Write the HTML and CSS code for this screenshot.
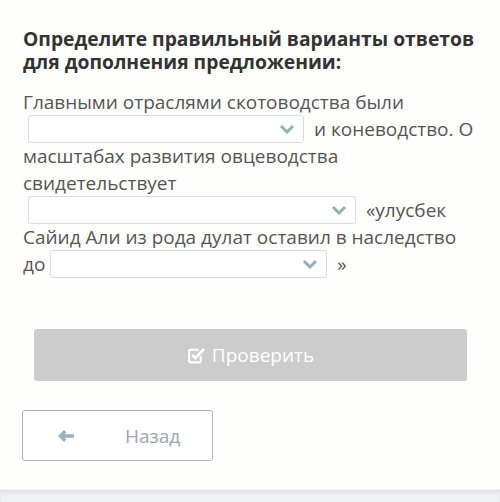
FILE: index.html
```html
<!DOCTYPE html>
<html>
<head>
<meta charset="utf-8">
<link rel="stylesheet" href="styles.css">
</head>
<body>
<div class="page">
  <div class="content">
    <h1 class="title">Определите правильный варианты ответов для дополнения предложении:</h1>
    <div class="text">Главными отраслями скотоводства были<span class="sel sel1"><svg class="chev" viewBox="0 0 16 10" width="16" height="10"><path d="M2 2 L8 8 L14 2" fill="none" stroke="#8fb3b6" stroke-width="3"/></svg></span> и коневодство. О масштабах развития овцеводства свидетельствует<span class="sel sel2"><svg class="chev" viewBox="0 0 16 10" width="16" height="10"><path d="M2 2 L8 8 L14 2" fill="none" stroke="#8fb3b6" stroke-width="3"/></svg></span> «улусбек Сайид Али из рода дулат оставил в наследство до<span class="sel sel3"><svg class="chev" viewBox="0 0 16 10" width="16" height="10"><path d="M2 2 L8 8 L14 2" fill="none" stroke="#8fb3b6" stroke-width="3"/></svg></span> »</div>
    <div class="check-row">
      <button class="btn-check"><svg class="check-ico" viewBox="0 0 18 18" width="19" height="19"><path d="M13 9.5 V14 a1.5 1.5 0 0 1 -1.5 1.5 H3.5 A1.5 1.5 0 0 1 2 14 V5 A1.5 1.5 0 0 1 3.5 3.5 H11" fill="none" stroke="#fff" stroke-width="2"/><path d="M5 8.5 L8 11.5 L16 3" fill="none" stroke="#fff" stroke-width="2.6"/></svg>Проверить</button>
    </div>
    <button class="btn-back"><svg class="arrow" viewBox="0 0 18 14" width="18" height="14"><path d="M1 7 L7 1 L9.5 3.5 L7.5 5.3 L17 5.3 L17 8.7 L7.5 8.7 L9.5 10.5 L7 13 Z" fill="#9fb0b8"/></svg><span class="back-text">Назад</span></button>
  </div>
  <div class="footer"></div>
</div>
</body>
</html>
```
FILE: styles.css
```css
html, body {
  margin: 0;
  padding: 0;
}
body {
  background: #fefefc;
  font-family: "Open Sans", "DejaVu Sans", sans-serif;
  width: 500px;
  height: 502px;
  overflow: hidden;
}
.page {
  display: flex;
  flex-direction: column;
  height: 502px;
}
.content {
  flex: 1;
  padding: 27px 20px 0 23px;
}
.title {
  margin: 0;
  font-size: 19.3px;
  font-weight: 700;
  line-height: 23px;
  color: #333333;
}
.text {
  margin-top: 16px;
  font-size: 19px;
  line-height: 27px;
  color: #555555;
}
.sel {
  display: inline-flex;
  align-items: center;
  justify-content: flex-end;
  vertical-align: middle;
  height: 28px;
  box-sizing: border-box;
  border: 1px solid #d5dcdd;
  border-radius: 3px;
  background: #fff;
  margin: -4px 5px 0 5px;
  padding-right: 8px;
}
.sel1 { width: 276px; }
.sel2 { width: 328px; }
.sel3 { width: 277px; }
.chev { display: block; }
.check-row {
  margin-top: 51px;
  padding-left: 11px;
}
.btn-check {
  width: 433px;
  height: 52px;
  border: none;
  border-radius: 3px;
  background: #cccccc;
  color: #ffffff;
  font-family: "Open Sans", sans-serif;
  font-size: 19px;
  display: flex;
  align-items: center;
  justify-content: center;
  gap: 6px;
}
.check-ico { display: block; }
.btn-back {
  margin-top: 29px;
  margin-left: -1px;
  width: 191px;
  height: 51px;
  background: #ffffff;
  border: 1px solid #a9b4b9;
  border-radius: 3px;
  display: flex;
  align-items: center;
  padding: 0 0 0 34px;
  box-sizing: border-box;
  font-family: "Open Sans", sans-serif;
  font-size: 19px;
  color: #9aa8ae;
}
.arrow { display: block; }
.back-text { margin-left: 50px; }
.footer {
  height: 12px;
  background: #eef0f3;
  border-top: 1px solid #f0efea;
  box-shadow: inset 0 3px 3px rgba(0,0,0,0.05);
}
```
